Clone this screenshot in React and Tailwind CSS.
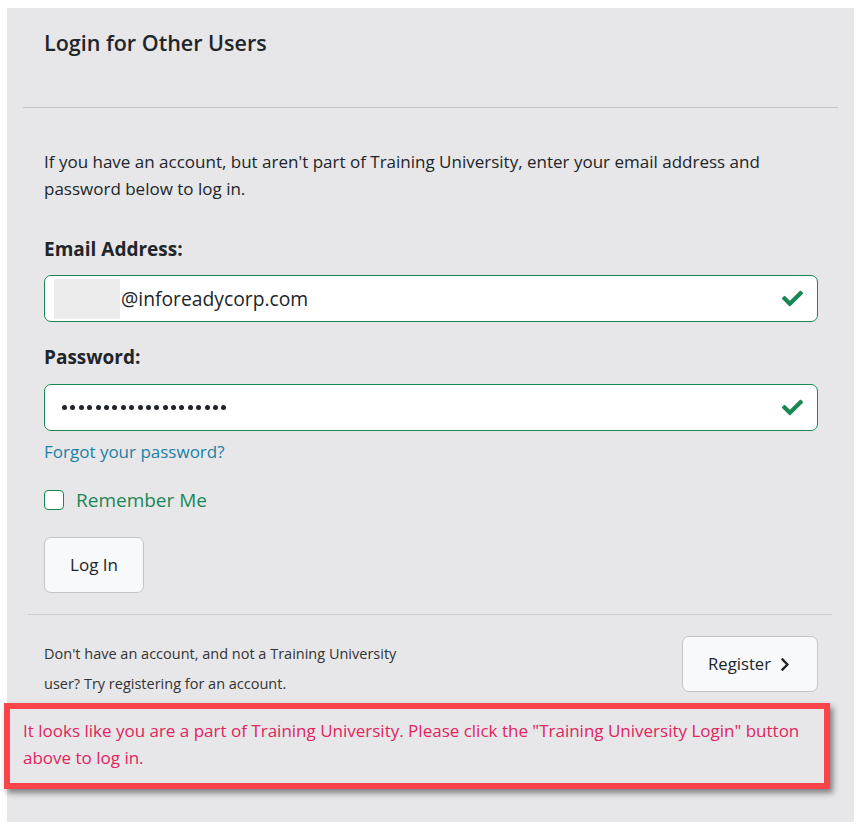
import React from "react";
import { FaCheck, FaChevronRight } from "react-icons/fa";

function Dots() {
  const arr = Array.from({ length: 20 });
  return (
    <div className="flex items-center gap-[3.4px]">
      {arr.map((_, i) => (
        <span key={i} className="block w-[5px] h-[5px] rounded-full bg-[#1f2328]" />
      ))}
    </div>
  );
}

export default function App() {
  return (
    <div className="bg-white w-full min-h-[831px] pt-[8px] pl-[7px]">
      <div className="w-[847px] h-[814px] bg-[#e7e7e9] flex flex-col font-['Open_Sans',sans-serif] text-[#212529]">
        <div className="h-[99px] pt-[21px] pl-[37px]">
          <h2 className="text-[21.5px] leading-[28px] font-semibold text-[#212529]">
            Login for Other Users
          </h2>
        </div>
        <div className="mx-[16px] h-px bg-[#c2c2c4]" />

        <div className="pl-[37px] pr-[36px] flex flex-col">
          <p className="mt-[40px] text-[17px] leading-[27px]">
            If you have an account, but aren't part of Training University, enter your email address and
            password below to log in.
          </p>

          <label className="mt-[34px] text-[19px] leading-[27px] font-bold">Email Address:</label>
          <div className="mt-[12px] h-[47px] bg-white border border-[#198754] rounded-[7px] flex items-center pl-[9px] pr-[14px]">
            <div className="w-[66px] h-[40px] bg-[#ebebeb] rounded-[1px]" />
            <span className="ml-[1px] text-[19.3px] leading-[27px] text-[#212529]">@inforeadycorp.com</span>
            <FaCheck className="ml-auto text-[#198754] w-[21px] h-[21px]" />
          </div>

          <label className="mt-[22px] text-[19px] leading-[27px] font-bold">Password:</label>
          <div className="mt-[13px] h-[47px] bg-white border border-[#198754] rounded-[7px] flex items-center pl-[17px] pr-[14px]">
            <Dots />
            <FaCheck className="ml-auto text-[#198754] w-[21px] h-[21px]" />
          </div>

          <a href="#" className="mt-[9px] text-[17px] leading-[24px] text-[#1b80a6] self-start">
            Forgot your password?
          </a>

          <div className="mt-[22px] h-[28px] flex items-center">
            <span className="w-[20px] h-[20px] bg-white border border-[#198754] rounded-[4px]" />
            <span className="ml-[12px] text-[19px] leading-[28px] text-[#198754]">Remember Me</span>
          </div>

          <button className="mt-[23px] w-[100px] h-[56px] bg-[#f8f9fa] border border-[#c4c4c6] rounded-[7px] text-[17px] text-[#212529] flex items-center justify-center">
            Log In
          </button>
        </div>

        <div className="mt-[21px] ml-[21px] mr-[22px] h-px bg-[#cdcdcf]" />

        <div className="pl-[37px] pr-[36px] mt-[21px] flex justify-between items-start">
          <p className="pt-[3px] w-[370px] text-[14.5px] leading-[30px] text-[#333]">
            Don't have an account, and not a Training University user? Try registering for an account.
          </p>
          <button className="w-[136px] h-[56px] bg-[#f8f9fa] border border-[#c4c4c6] rounded-[7px] text-[16.7px] text-[#212529] flex items-center pl-[25px]">
            Register
            <FaChevronRight className="ml-[8px] w-[12px] h-[15px] text-[#212529]" />
          </button>
        </div>

        <div className="mt-[4px] ml-[-3px] w-[826px] h-[86px] border-[6px] border-[#f94449] shadow-[3px_4px_6px_rgba(0,0,0,0.45)] pl-[13px] pr-[10px] pt-[8px]">
          <p className="text-[17px] leading-[27px] text-[#e0245e]">
            It looks like you are a part of Training University. Please click the "Training University Login" button
            above to log in.
          </p>
        </div>
      </div>
    </div>
  );
}
